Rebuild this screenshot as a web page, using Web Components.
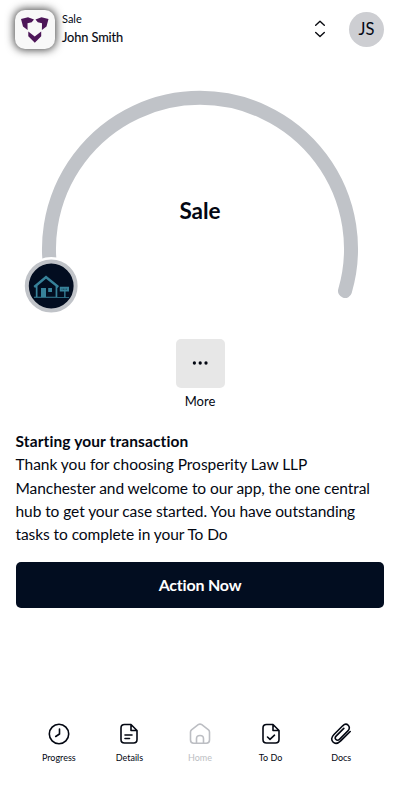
<!DOCTYPE html>
<html lang="en">
<head>
<meta charset="utf-8">
<title>Sale</title>
<style>
body{margin:0;background:#fff;color:#030712;font-family:Lato,"Liberation Sans",sans-serif;font-variant-ligatures:none}
</style>
</head>
<body>
<sale-app></sale-app>
<script>
const define=(name,html)=>customElements.define(name,class extends HTMLElement{
  connectedCallback(){
    if(this.shadowRoot)return;
    const t=document.createElement('template');t.innerHTML=html;
    this.attachShadow({mode:'open'}).append(t.content.cloneNode(true));
  }
});

define('app-header',`<style>
:host{display:flex;height:58px;padding:0 16px 0 15px;align-items:center;box-sizing:border-box}
.logo{width:40px;height:39px;border-radius:10px;background:#f8f8f8;box-shadow:0 0 8px 1px #444;flex:none}
svg{display:block}
.who{margin-left:7px;flex:1;display:flex;flex-direction:column;white-space:nowrap}
.kind{font-size:11px;line-height:18px;margin-top:-2px}
.name{font-size:12.8px;line-height:18px;letter-spacing:-.1px;-webkit-text-stroke:.15px currentColor}
.sort{margin-right:21px}
.avatar{width:35px;height:35px;border-radius:50%;background:#cdced2;display:grid;place-items:center;font-size:16.5px;line-height:20px}
.avatar span{margin-top:-1px}
</style>
<div class="logo"><svg width="40" height="39" viewBox="0 0 40 39"><g fill="#4d1658"><path d="M6 9L13 7.3L19 9.5L16.7 12.2L12.5 13.2L12.6 20L8 16.5Z"/><path d="M33.5 9L26.5 7.3L20.5 9.5L22.8 12.2L27 13.2L26.9 20L31.5 16.5Z"/><path d="M13.3 21.5L19.7 26.5L26.2 21.5V26.3L19.8 32.8L13.3 26.3Z"/></g></svg></div>
<div class="who"><span class="kind"><slot name="kind"></slot></span><span class="name"><slot name="name"></slot></span></div>
<svg class="sort" width="16" height="20" viewBox="0 0 16 20" fill="none" stroke="#090a10" stroke-width="1.4" stroke-linecap="round" stroke-linejoin="round"><path d="M3.7 6.2L8 2.2L12.3 6.2M3.7 13.5L8 17.5L12.3 13.5"/></svg>
<div class="avatar"><span><slot name="initials"></slot></span></div>`);

define('progress-dial',`<style>
:host{display:grid;height:281px}
svg,.title{grid-area:1/1}
.title{justify-self:center;margin-top:139px;font-size:22.5px;line-height:28px;font-weight:700}
</style>
<svg width="400" height="281" viewBox="0 58 400 281">
<path d="M55 291A151 151 0 1 1 345 291" fill="none" stroke="#c0c3c8" stroke-width="14" stroke-linecap="round"/>
<circle cx="51.2" cy="286" r="29" fill="#fff"/>
<circle cx="51.2" cy="286" r="24.4" fill="#020d20" stroke="#c0c3c8" stroke-width="4"/>
<g fill="#37829a"><path d="M33.5 286L46 275.4L59 286L57.7 288L46 278.8L35 288Z"/>
<path d="M35.8 286H37.5V296.7H41V288H46V296.7H55.6V286H57.3V297H69V297.8H34V296.7H35.8Z"/>
<path d="M48.2 288H52V292H48.2ZM59.8 286.8H69V291.5H65.5V297.5H64.2V291.5H59.8Z"/></g>
<path d="M61.5 289.2H67.2" stroke="#17465b" stroke-width="1" stroke-dasharray="1 .5"/>
</svg><div class="title"><slot></slot></div>`);

define('more-button',`<style>
:host{display:flex;flex-direction:column;align-items:center;height:91px;font-size:13px;line-height:18px}
.box{width:49px;height:49px;border-radius:5px;background:#e7e7e7;display:flex;align-items:center;justify-content:center;margin-bottom:4px}
svg{margin-top:-1px}
</style><div class="box"><svg width="18" height="6" viewBox="0 0 18 6" fill="#030712"><circle cx="3.4" cy="3" r="1.65"/><circle cx="9.2" cy="3" r="1.65"/><circle cx="15" cy="3" r="1.65"/></svg></div><slot></slot>`);

define('status-message',`<style>
:host{display:block;padding:0 15.5px;height:132px;box-sizing:border-box;font-size:15.5px;line-height:23.3px;letter-spacing:-.07px;white-space:nowrap}
.head{font-weight:700;letter-spacing:.12px}
::slotted(.lead){letter-spacing:-.02px}
</style><div class="head"><slot name="head"></slot></div><slot></slot>`);

define('action-button',`<style>
:host{display:block;margin:0 16px}
button{display:block;width:100%;height:46px;border:0;border-radius:5px;background:#020d20;color:#fff;font:700 16px/23px Lato,"Liberation Sans",sans-serif;font-variant-ligatures:none;letter-spacing:-.2px;padding:0 0 1px}
</style><button><slot></slot></button>`);

define('nav-item',`<style>
:host{display:flex;flex:1;flex-direction:column;align-items:center;font-size:9px;line-height:12px}
:host([active]){color:#bcbec3}
::slotted(svg){display:block;width:24px;height:24px;margin-bottom:6px;fill:none;stroke:currentColor;stroke-width:1.6;stroke-linecap:round;stroke-linejoin:round}
</style><slot name="icon"></slot><span><slot></slot></span>`);

define('nav-bar',`<style>:host{display:flex;padding:0 23.5px;margin-top:114px}</style><slot></slot>`);

define('sale-app',`<style>:host{display:block;width:400px;height:800px;overflow:hidden}</style>
<app-header><span slot="kind">Sale</span><span slot="name">John Smith</span><span slot="initials">JS</span></app-header>
<progress-dial>Sale</progress-dial>
<more-button>More</more-button>
<status-message><span slot="head">Starting your transaction</span><span class="lead">Thank you for choosing Prosperity Law LLP</span><br>Manchester and welcome to our app, the one central<br>hub to get your case started. You have outstanding<br>tasks to complete in your To Do</status-message>
<action-button>Action Now</action-button>
<nav-bar>
<nav-item><svg slot="icon" viewBox="0 0 24 24"><circle cx="12" cy="12" r="9.7"/><path d="M12.5 7V12L8.7 14.5"/></svg>Progress</nav-item>
<nav-item><svg slot="icon" viewBox="0 0 24 24"><path d="M13.5 2.5H7.5Q4 2.5 4 6V17.5Q4 21 7.5 21H16.5Q20 21 20 17.5V8.5L14 2.5V8.5H20M8 13H15M8 16.5H12.5"/></svg>Details</nav-item>
<nav-item active><svg slot="icon" viewBox="0 0 24 24"><path d="M2.5 10Q2.5 8.7 3.5 7.8L10.2 2.7Q12 1.5 13.8 2.7L20.5 7.8Q21.5 8.7 21.5 10V18Q21.5 21.2 18.3 21.2H5.7Q2.5 21.2 2.5 18ZM8.5 21V16.7Q8.5 13.5 12 13.5T15.5 16.7V21"/></svg>Home</nav-item>
<nav-item><svg slot="icon" viewBox="0 0 24 24"><path d="M13.5 2.5H7.5Q4 2.5 4 6V17.5Q4 21 7.5 21H16.5Q20 21 20 17.5V8.5L14 2.5V8.5H20M8.5 15L11 17.3L15.5 13.2"/></svg>To Do</nav-item>
<nav-item><svg slot="icon" viewBox="0 0 24 24"><path d="M21.2 9.5L11.7 18.9C9 21.5 6 22 4 20S2.3 15.2 5 12.5L13.7 3.8C15.6 2 17.7 1.8 19.2 3.3S20.8 7 18.9 8.9L10.7 17.1C9.5 18.3 8 18.6 6.9 17.5S6.2 15 7.3 13.9L14.8 6.4"/></svg>Docs</nav-item>
</nav-bar>`);
</script>
</body>
</html>
